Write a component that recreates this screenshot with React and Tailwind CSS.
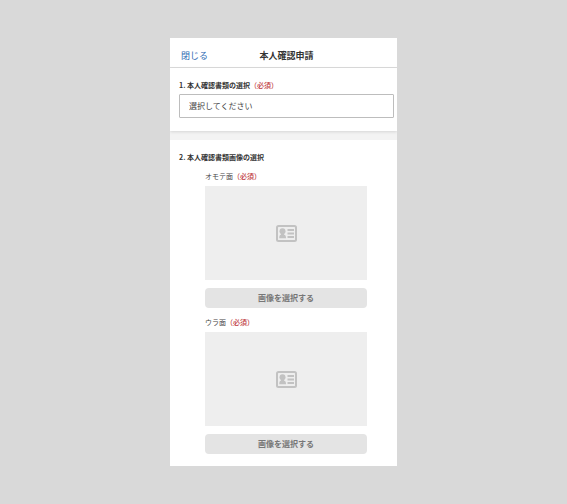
import { useId } from 'react';

const sides = ['オモテ面', 'ウラ面'];

function Required() {
  return <span className="font-medium text-[#c0393d]">（必須）</span>;
}

function IdCardIcon() {
  return (
    <svg viewBox="0 0 42 34" className="w-[21px] h-[17px]" fill="#c2c2c2" aria-hidden="true">
      <rect x="2" y="2" width="38" height="30" rx="3" fill="none" stroke="#c2c2c2" strokeWidth="4" />
      <circle cx="13" cy="12.5" r="6" />
      <path d="M10 16h6v3c3 .8 4 3 4 7.500H6.500c0-4.500.5-6.700 3.500-7.500z" />
      <path d="M23 8h13v4H23zM23 15h13v4H23zM23 22h13v4H23z" />
    </svg>
  );
}

function ImageField({ label }) {
  const id = useId();

  return (
    <div role="group" aria-labelledby={id}>
      <p id={id} className="text-[7px] leading-[10px] text-[#444]">
        {label}
        <Required />
      </p>
      <div className="mt-[5px] h-[94px] bg-[#eee] flex items-center justify-center">
        <IdCardIcon />
      </div>
      <button
        type="button"
        className="mt-2 w-full h-5 rounded bg-[#e4e4e4] flex items-center justify-center text-[8px] font-bold text-[#777]"
      >
        画像を選択する
      </button>
    </div>
  );
}

export default function App() {
  return (
    <div
      lang="ja"
      className="min-h-screen bg-[#d9d9d9] flex items-center justify-center font-['Noto_Sans_CJK_JP',sans-serif]"
    >
      <main className="w-full max-w-[227px] bg-white overflow-hidden">
        {/* Header */}
        <header className="grid grid-cols-[1fr_auto_1fr] items-center h-[30px] pt-1.5 pl-[11px] pr-[5px] border-b border-[#dcdcdc]">
          <a href="#" className="text-[9px] leading-3 text-[#2f6cb3]">閉じる</a>
          <h1 className="text-[9px] leading-3 font-bold text-[#333]">本人確認申請</h1>
        </header>

        <div className="bg-[#f3f3f3] pb-[9px]">
          {/* Document type */}
          <section className="bg-white pl-[9px] pr-[3px] pt-3 pb-[13px] shadow-[0_1px_3px_rgba(0,0,0,0.12)]">
            <label htmlFor="document" className="block text-[7px] leading-[11px] font-bold text-[#333]">
              1. 本人確認書類の選択
              <Required />
            </label>
            <select
              id="document"
              className="appearance-none block mt-[3px] w-full h-6 pl-[9px] bg-white border border-[#bdbdbd] rounded-[1px] text-[8px] text-[#444]"
            >
              <option>選択してください</option>
            </select>
          </section>
        </div>

        {/* Document images */}
        <section className="pl-[9px] pr-[3px] pt-3 pb-3">
          <h2 className="text-[7px] leading-[11px] font-bold text-[#333]">2. 本人確認書類画像の選択</h2>
          <div className="mt-2 pl-[26px] pr-[27px] flex flex-col gap-[9px]">
            {sides.map(side => (
              <ImageField key={side} label={side} />
            ))}
          </div>
        </section>
      </main>
    </div>
  );
}
